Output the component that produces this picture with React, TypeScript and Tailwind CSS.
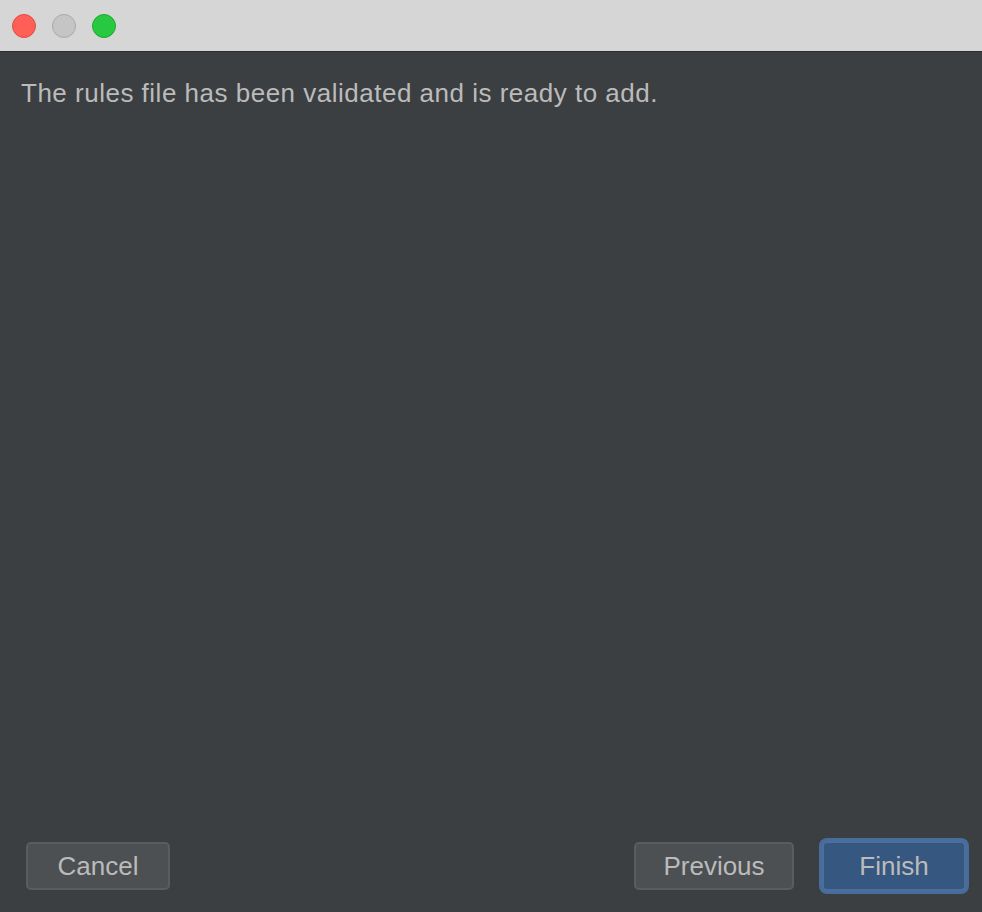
export default function App() {
  return (
    <div className="w-[982px] h-[912px] flex flex-col bg-[#3c3f41] font-['Liberation_Sans',Arial,sans-serif] overflow-hidden">
      <div className="h-[52px] shrink-0 bg-[#d7d6d7] border-b border-[#2b2d2e] flex items-center gap-[16px] pl-[12px]">
        <span className="w-[24px] h-[24px] rounded-full bg-[#fe5f57] border border-[#e24b43]" />
        <span className="w-[24px] h-[24px] rounded-full bg-[#c6c5c6] border border-[#aaa9aa]" />
        <span className="w-[24px] h-[24px] rounded-full bg-[#28c840] border border-[#1fa832]" />
      </div>
      <div className="flex-1 px-[21px] pt-[26px]">
        <p className="text-[26px] leading-[30px] tracking-[0.5px] text-[#bbbbbb]">
          The rules file has been validated and is ready to add.
        </p>
      </div>
      <div className="flex items-center justify-between pl-[26px] pr-[13px] pb-[18px]">
        <button className="w-[144px] h-[48px] pt-[1px] rounded-[5px] border-2 border-[#595d5f] bg-[#4c5052] text-[26px] text-[#bbbbbb]">
          Cancel
        </button>
        <div className="flex items-center gap-[25px]">
          <button className="w-[160px] h-[48px] pt-[1px] rounded-[5px] border-2 border-[#595d5f] bg-[#4c5052] text-[26px] text-[#bbbbbb]">
            Previous
          </button>
          <button className="w-[150px] h-[56px] rounded-[8px] bg-[#466d9d] p-[3px]">
            <span className="flex w-full h-full pt-[1px] items-center justify-center rounded-[5px] border-2 border-[#4c6f99] bg-[#365880] text-[26px] text-[#bbbbbb]">
              Finish
            </span>
          </button>
        </div>
      </div>
    </div>
  );
}
